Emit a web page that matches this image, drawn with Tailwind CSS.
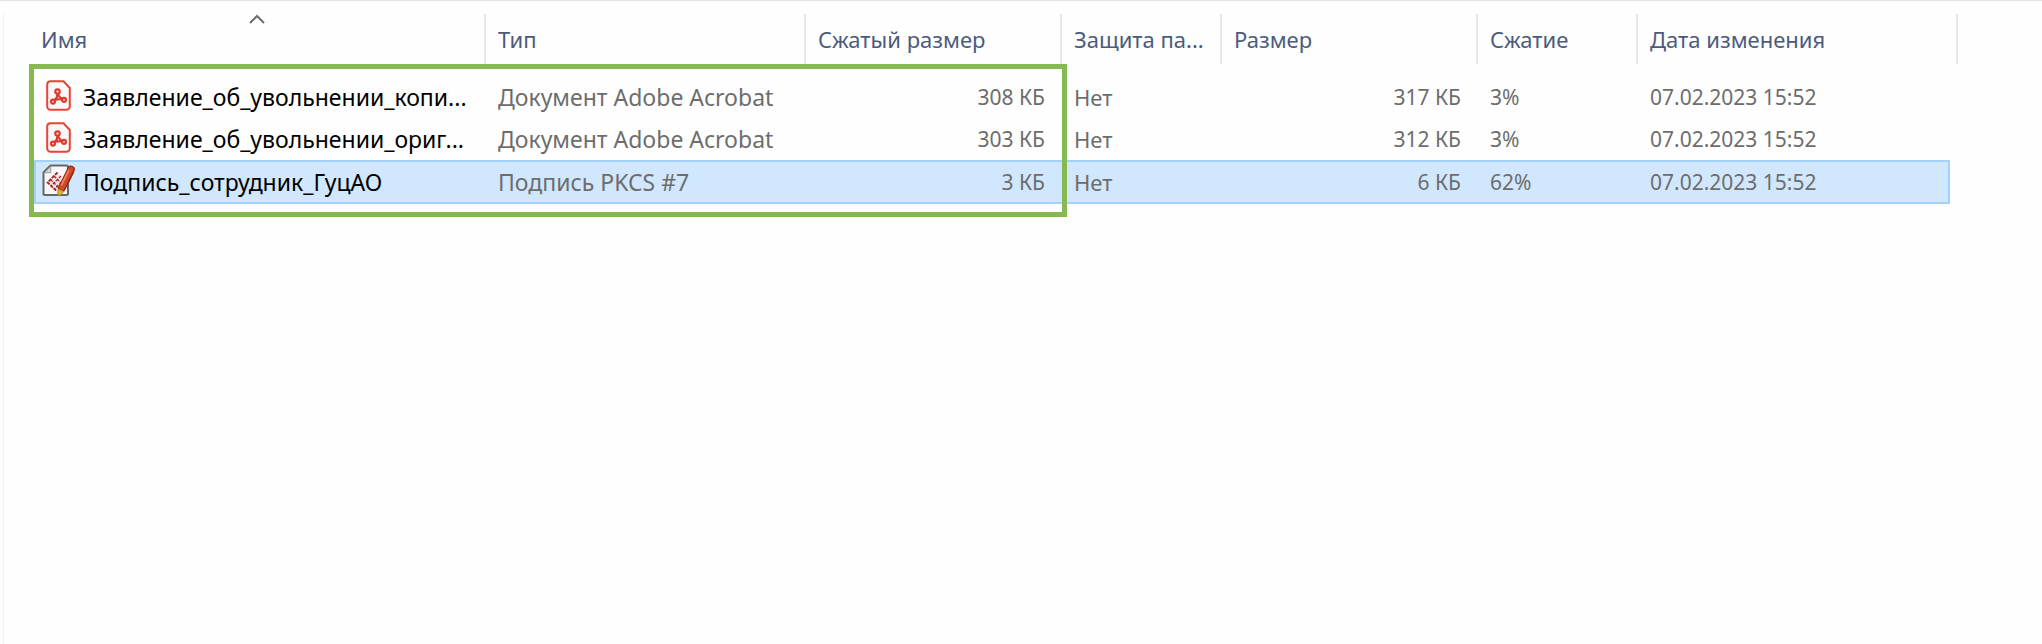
<!DOCTYPE html>
<html lang="ru">
<head>
<meta charset="utf-8">
<meta name="viewport" content="width=device-width, initial-scale=1">
<title>Содержимое архива</title>
<script src="https://cdn.jsdelivr.net/npm/@tailwindcss/browser@4"></script>
</head>
<body class="min-h-screen border-t border-[#e4e4e4] bg-[#fefefe] pt-[13px] font-['Noto_Sans','Open_Sans',sans-serif] text-[23px] leading-8 text-[#6d6d6d]">
<svg class="hidden" aria-hidden="true">
  <symbol id="pdf" viewBox="0 0 25 31">
    <path d="M4 1.2h13.5L23.8 8v18.500a3.300 3.300 0 0 1-3.300 3.300H4.500a3.300 3.300 0 0 1-3.300-3.300V4.500A3.300 3.300 0 0 1 4 1.200z" fill="#f8f8f8" stroke="#ea4335" stroke-width="2"/>
    <g fill="none" stroke="#e03a2c" stroke-width="2.200" stroke-linecap="round" stroke-linejoin="round">
      <circle cx="11.500" cy="11.600" r="2.200"/>
      <circle cx="7" cy="21.600" r="2"/>
      <circle cx="18" cy="19.800" r="2"/>
      <path d="M11.500 14c0 3-1.500 5.200-3.200 6.200M12 14c.8 2.500 2.200 4 4 5.200M8.800 20.200c2-.9 4.500-1.200 7-.8"/>
    </g>
  </symbol>
  <symbol id="signature" viewBox="0 0 33 33">
    <path d="M8.500 1.500H24.500Q26 1.500 26 3V29.500Q26 31 24.500 31H3Q1.500 31 1.500 29.500V8.500z" fill="#f7f7f7" stroke="#666" stroke-width="2"/>
    <path d="M8.800 2.500v6.200H2.500z" fill="#d9d9d9" stroke="#999"/>
    <path d="M15 8.500 25 18.500 15 27 5 18.500z" fill="#f3e4e4"/>
    <g fill="none" stroke="#a3252b" stroke-width="1.400">
      <path d="M15.500 8.500 5.500 18.500 14 26.500" stroke-width="1.800" stroke-dasharray="3.500 1"/>
      <path d="M12 12 22 22M8.500 15.500 18 25M19 12 9.500 21.500M22.500 15.500 12.500 25" stroke-dasharray="3 1.200"/>
    </g>
    <path d="M29 5.500 20 24" stroke="#8f2410" stroke-width="7.600" stroke-linecap="round"/>
    <path d="M28.700 5.600 20 23.500" stroke="#cf4a27" stroke-width="5.600" stroke-linecap="round"/>
    <path d="M26.800 6.500 19.500 21" stroke="#f0906c" stroke-width="1.600" stroke-linecap="round"/>
    <path d="M31.200 8.500 26 19" stroke="#962a14" stroke-width="1.600" stroke-linecap="round"/>
    <path d="M16 25 22 27.500 18 31.500 15.500 30.500z" fill="#e0ae35" stroke="#b8821e" stroke-width=".8"/>
  </symbol>
</svg>

<main class="min-h-[calc(100vh-14px)] ml-[3px] border-l border-[#f1f1f1] pl-[30px]">
  <div class="relative w-max">
    <table class="table-fixed border-collapse w-[1924px] whitespace-nowrap text-left">
      <colgroup>
        <col class="w-[452px]"><col class="w-[320px]"><col class="w-[256px]"><col class="w-[160px]"><col class="w-[256px]"><col class="w-[160px]"><col class="w-[320px]">
      </colgroup>
      <thead>
        <tr class="text-[22px] text-[#4c5b7c]">
          <th class="p-0 pb-3 font-normal" aria-sort="ascending"><button class="relative flex h-[50px] w-full items-center border-r-2 border-[#e6e6e6] pl-[7px] text-left">Имя<svg class="absolute left-1/2 top-0 h-[10px] w-4 -translate-x-2.5" viewBox="0 0 16 10" fill="none" stroke="#6e6e6e" stroke-width="2" aria-hidden="true"><path d="M1 9 8 2l7 7"/></svg></button></th>
          <th class="p-0 pb-3 font-normal"><button class="flex h-[50px] w-full items-center border-r-2 border-[#e6e6e6] pl-3">Тип</button></th>
          <th class="p-0 pb-3 font-normal"><button class="flex h-[50px] w-full items-center border-r-2 border-[#e6e6e6] pl-3">Сжатый размер</button></th>
          <th class="p-0 pb-3 font-normal"><button class="flex h-[50px] w-full items-center border-r-2 border-[#e6e6e6] pl-3">Защита па...</button></th>
          <th class="p-0 pb-3 font-normal"><button class="flex h-[50px] w-full items-center border-r-2 border-[#e6e6e6] pl-3">Размер</button></th>
          <th class="p-0 pb-3 font-normal"><button class="flex h-[50px] w-full items-center border-r-2 border-[#e6e6e6] pl-3">Сжатие</button></th>
          <th class="p-0 pb-3 font-normal"><button class="flex h-[50px] w-full items-center border-r-2 border-[#e6e6e6] pl-3">Дата изменения</button></th>
        </tr>
      </thead>
      <tbody>
        <tr>
          <td class="p-0"><div class="flex h-[42px] items-center text-black"><span class="ml-3 mr-3 pb-1"><svg class="h-[31px] w-[25px]" aria-hidden="true"><use href="#pdf"/></svg></span>Заявление_об_увольнении_копи...</div></td>
          <td class="p-0 pl-3">Документ Adobe Acrobat</td>
          <td class="p-0 pr-[17px] text-right text-[21px]">308 КБ</td>
          <td class="p-0 pl-3 text-[22px]">Нет</td>
          <td class="p-0 pr-[17px] text-right text-[21px]">317 КБ</td>
          <td class="p-0 pl-3 text-[21px]">3%</td>
          <td class="p-0 pl-3 text-[21px]">07.02.2023 15:52</td>
        </tr>
        <tr>
          <td class="p-0"><div class="flex h-[42px] items-center text-black"><span class="ml-3 mr-3 pb-1"><svg class="h-[31px] w-[25px]" aria-hidden="true"><use href="#pdf"/></svg></span>Заявление_об_увольнении_ориг...</div></td>
          <td class="p-0 pl-3">Документ Adobe Acrobat</td>
          <td class="p-0 pr-[17px] text-right text-[21px]">303 КБ</td>
          <td class="p-0 pl-3 text-[22px]">Нет</td>
          <td class="p-0 pr-[17px] text-right text-[21px]">312 КБ</td>
          <td class="p-0 pl-3 text-[21px]">3%</td>
          <td class="p-0 pl-3 text-[21px]">07.02.2023 15:52</td>
        </tr>
        <tr aria-selected="true">
          <td class="p-0"><div class="flex h-11 items-center border-y-2 border-l-2 border-[#a2d1fd] bg-[#d1e7fe] text-black"><span class="ml-1.5 mr-2 pb-1"><svg class="size-[33px]" aria-hidden="true"><use href="#signature"/></svg></span>Подпись_сотрудник_ГуцАО</div></td>
          <td class="p-0"><div class="flex h-11 items-center border-y-2 border-[#a2d1fd] bg-[#d1e7fe] pl-3">Подпись PKCS #7</div></td>
          <td class="p-0"><div class="flex h-11 items-center justify-end border-y-2 border-[#a2d1fd] bg-[#d1e7fe] pr-[17px] text-[21px]">3 КБ</div></td>
          <td class="p-0"><div class="flex h-11 items-center border-y-2 border-[#a2d1fd] bg-[#d1e7fe] pl-3 text-[22px]">Нет</div></td>
          <td class="p-0"><div class="flex h-11 items-center justify-end border-y-2 border-[#a2d1fd] bg-[#d1e7fe] pr-[17px] text-[21px]">6 КБ</div></td>
          <td class="p-0"><div class="flex h-11 items-center border-y-2 border-[#a2d1fd] bg-[#d1e7fe] pl-3 text-[21px]">62%</div></td>
          <td class="p-0 pr-2"><div class="flex h-11 items-center border-y-2 border-r-2 border-[#a2d1fd] bg-[#d1e7fe] pl-3 text-[21px]">07.02.2023 15:52</div></td>
        </tr>
      </tbody>
    </table>
    <!-- Highlight frame over the first three columns -->
    <div class="pointer-events-none absolute -left-[5px] top-[50px] h-[153px] w-[1038px] border-5 border-[#86b953]"></div>
  </div>
</main>
</body>
</html>
